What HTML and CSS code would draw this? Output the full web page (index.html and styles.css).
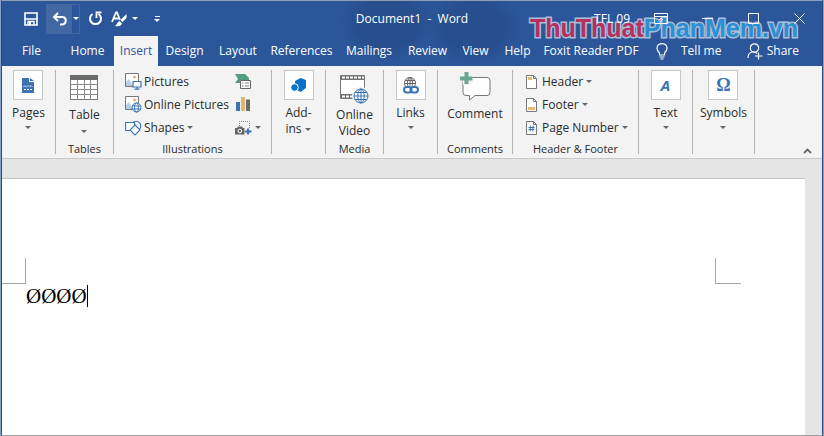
FILE: index.html
```html
<!DOCTYPE html>
<html lang="en">
<head>
  <meta charset="utf-8" />
  <meta name="viewport" content="width=device-width, initial-scale=1.0" />
  <title>Document1 - Word</title>
  <link rel="stylesheet" href="styles.css">
</head>
<body>
  <div class="window">
    <header class="top">
      <div class="titlebar">
        <div class="quick">
          <button class="quick-btn" aria-label="Save">
            <svg width="14" height="14" viewBox="0 0 14 14"><path d="M1 1h12v12H1z" fill="none" stroke="#fff" stroke-width="1.6"/><path d="M1 7h12M4 13V9.500h6V13" fill="none" stroke="#fff" stroke-width="1.4"/><path d="M5 10h2v3H5z" fill="#fff"/></svg>
          </button>
          <div class="undo">
            <button class="undo-main" aria-label="Undo">
              <svg width="16" height="14" viewBox="0 0 16 14"><path d="M6 1L2 5l4 4M2.500 5H10c5 0 5 7 0 7.500H8" fill="none" stroke="#fff" stroke-width="2"/></svg>
            </button>
            <button class="undo-more" aria-label="Undo list"><span class="caret"></span></button>
          </div>
          <button class="quick-btn redo" aria-label="Repeat">
            <svg width="15" height="15" viewBox="0 0 15 15"><path d="M4.500 3A5.500 5.500 0 1 0 10.500 3" fill="none" stroke="#fff" stroke-width="2"/><path d="M8.500 7V1.500h5" fill="none" stroke="#fff" stroke-width="1.800"/></svg>
          </button>
          <button class="quick-btn styles" aria-label="Format">
            <svg width="17" height="16" viewBox="0 0 17 16"><path d="M1 11L5 1.500h1L9 9M2.500 7.500h5" fill="none" stroke="#fff" stroke-width="1.800"/><path d="M15.500 3v4l-4 4-2-2z" fill="#fff"/><path d="M8.500 10l2.500 2.500c-1 3-4 3-7 2.500 2-1 2-4 4.500-5z" fill="#fff"/></svg>
            <span class="caret"></span>
          </button>
          <button class="quick-btn customize" aria-label="Customize toolbar"><span class="bar"></span><span class="caret"></span></button>
        </div>
        <div class="doc-title">Document1&nbsp; -&nbsp; Word</div>
        <div class="controls">
          <button class="user">TFL 09</button>
          <button class="control" aria-label="Ribbon display options">
            <svg width="14" height="11" viewBox="0 0 14 11"><path d="M.5.5h13v10H.5zM.5 3.500h13M7 9V5M5 7l2-2 2 2" fill="none" stroke="#fff"/></svg>
          </button>
          <button class="control" aria-label="Minimize">
            <svg width="11" height="11" viewBox="0 0 11 11"><path d="M0 5.500h11" stroke="#fff"/></svg>
          </button>
          <button class="control" aria-label="Maximize">
            <svg width="11" height="11" viewBox="0 0 11 11"><path d="M.5.5h10v10H.5z" fill="none" stroke="#fff"/></svg>
          </button>
          <button class="control" aria-label="Close">
            <svg width="11" height="11" viewBox="0 0 11 11"><path d="M.5.5l10 10M10.500.5l-10 10" stroke="#fff"/></svg>
          </button>
        </div>
        <div class="brand"><span class="brand-red">ThuThuat</span><span class="brand-blue">PhanMem.vn</span></div>
      </div>
      <nav class="tabs">
        <button class="tab">File</button>
        <button class="tab">Home</button>
        <button class="tab active">Insert</button>
        <button class="tab">Design</button>
        <button class="tab">Layout</button>
        <button class="tab">References</button>
        <button class="tab">Mailings</button>
        <button class="tab">Review</button>
        <button class="tab">View</button>
        <button class="tab">Help</button>
        <button class="tab">Foxit Reader PDF</button>
        <button class="tab tell">
          <svg width="12" height="17" viewBox="0 0 12 17"><path d="M3.500 12V10C-1 6 1 .7 6 .7S13 6 8.500 10v2zM3.500 14h5M4.500 16h3" fill="none" stroke="#fff" stroke-width="1.200"/></svg>
          Tell me
        </button>
        <button class="tab share">
          <svg width="16" height="17" viewBox="0 0 16 17"><circle cx="7.500" cy="5" r="4.200" fill="none" stroke="#fff" stroke-width="1.200"/><path d="M1 15c0-4 2-6 5-6 2 0 3 .5 4 1.500M11.500 9.500v7M8 13h7.500" fill="none" stroke="#fff" stroke-width="1.200"/></svg>
          Share
        </button>
      </nav>
    </header>

    <section class="ribbon">
      <div class="group narrow">
        <button class="big boxed">
          <span class="icon-box"><svg width="12" height="15" viewBox="0 0 12 15"><path d="M0 0h7v4h5v11H0z" fill="#3a74b4"/><path d="M8 0l4 3H8z" fill="#3a74b4"/><path d="M1.500 9l1.500-1.500L4.500 9 6 7.500 7.500 9 9 7.500 10.500 9M2 11.500h8" fill="none" stroke="#fff" stroke-dasharray="2 1"/></svg></span>
          <span>Pages</span><span class="caret dark"></span>
        </button>
      </div>

      <div class="group tables">
        <button class="big">
          <svg width="28" height="25" viewBox="0 0 28 25"><path d="M.5.5h27v24H.5z" fill="#fff" stroke="#777"/><path d="M0 0h28v5H0z" fill="#6b6b6b"/><path d="M.5 9.500h27M.5 14.500h27M.5 19.500h27M7.500 5v20M14.500 5v20M20.500 5v20" stroke="#8a8a8a"/></svg>
          <span>Table</span><span class="caret dark"></span>
        </button>
        <div class="label">Tables</div>
      </div>

      <div class="group illustrations">
        <div class="columns">
          <div class="rows">
            <button class="small">
              <svg width="17" height="17" viewBox="0 0 17 17"><path d="M.5.5h13v13H.5z" fill="#fff" stroke="#777"/><path d="M1 13V9l3-3 4 7z" fill="#b9d0e4"/><circle cx="9.500" cy="4" r="1.500" fill="#e6b566"/><path d="M8 8.500h8V14H8z" fill="#fff" stroke="#3a74b4" stroke-width="1.200"/><path d="M12 14v2M9.500 16.200h5" stroke="#3a74b4" stroke-width="1.200"/></svg>
              Pictures
            </button>
            <button class="small">
              <svg width="17" height="17" viewBox="0 0 17 17"><path d="M.5.5h13v13H.5z" fill="#fff" stroke="#777"/><path d="M1 13V9l3-3 4 7z" fill="#b9d0e4"/><circle cx="9.500" cy="4" r="1.500" fill="#e6b566"/><g fill="none" stroke="#3a74b4"><circle cx="11.500" cy="11.500" r="4.500" fill="#fff"/><ellipse cx="11.500" cy="11.500" rx="2" ry="4.500"/><path d="M7 10h9M7 13h9"/></g></svg>
              Online Pictures
            </button>
            <button class="small">
              <svg width="17" height="16" viewBox="0 0 17 16"><g stroke="#3a74b4" stroke-width="1.100"><circle cx="11" cy="6" r="4.800" fill="#f3f3f3"/><path d="M.6 2.500h9v8h-9z" fill="#fff"/><path d="M10 5l5 5-5 5-5-5z" fill="#fff"/></g></svg>
              Shapes <span class="caret dark"></span>
            </button>
          </div>
          <div class="rows">
            <button class="small" aria-label="SmartArt">
              <svg width="17" height="17" viewBox="0 0 17 17"><path d="M0 1h10l4 4v2H5v3H0l3-4z" fill="#4f9c7f"/><path d="M5.500 7.500h10v8h-10z" fill="#fff" stroke="#666"/><path d="M7 10h1.500M7 13h1.500M10 10h4M10 13h4" stroke="#777"/></svg>
            </button>
            <button class="small" aria-label="Chart">
              <svg width="16" height="15" viewBox="0 0 16 15"><path d="M1 5h4v9H1z" fill="#3a74b4"/><path d="M6 0h4v14H6z" fill="#e3b76b"/><path d="M11 2.500h4V14h-4z" fill="#6b6b6b"/></svg>
            </button>
            <button class="small" aria-label="Screenshot">
              <svg width="17" height="16" viewBox="0 0 17 16"><path d="M4.500 6V1.500h10V8" fill="none" stroke="#888" stroke-dasharray="1 1"/><path d="M0 8h2l1-1.500h4L8 8h1.500v6.500H0z" fill="#666"/><circle cx="4.800" cy="11" r="1.800" fill="none" stroke="#fff"/><path d="M13 8.500v6M10 11.500h6.500" stroke="#3a74b4" stroke-width="2"/></svg>
              <span class="caret dark"></span>
            </button>
          </div>
        </div>
        <div class="label">Illustrations</div>
      </div>

      <div class="group narrow">
        <button class="big boxed">
          <span class="icon-box"><svg width="15" height="14" viewBox="0 0 15 14"><path d="M9.500 0L15 2v8l-5.500 4L4 11V3z" fill="#0a72c6"/><circle cx="3.500" cy="9.500" r="3.800" fill="#0a72c6" stroke="#fff"/></svg></span>
          <span>Add-<br><span class="with-caret">ins <span class="caret dark"></span></span></span>
        </button>
      </div>

      <div class="group tables">
        <button class="big video">
          <svg width="29" height="29" viewBox="0 0 29 29"><path d="M.5.500h24v23H.5z" fill="#fff" stroke="#777"/><path d="M1 2.500h23M1 21.500h23" stroke="#6b6b6b" stroke-width="3"/><path d="M2 2.500h22M2 21.500h22" stroke="#fff" stroke-width="2" stroke-dasharray="3 1"/><path d="M0 4.500h25M0 19.500h25" stroke="#777"/><g fill="none" stroke="#3a74b4"><circle cx="21" cy="21" r="8.500" fill="#f3f3f3" stroke="#f3f3f3"/><circle cx="21" cy="21" r="7" fill="#fff"/><ellipse cx="21" cy="21" rx="3.200" ry="7"/><path d="M14 21h14M15 17.500h12M15 24.500h12M21 14v14"/></g></svg>
          <span>Online<br>Video</span>
        </button>
        <div class="label">Media</div>
      </div>

      <div class="group narrow">
        <button class="big boxed">
          <span class="icon-box"><svg width="16" height="17" viewBox="0 0 16 17"><g fill="none" stroke="#666"><circle cx="7" cy="6" r="5.500"/><ellipse cx="7" cy="6" rx="2.500" ry="5.500"/><path d="M2 3.500h10M1.500 6.500h11M7 0v10"/></g><path d="M0 9h16v8H0z" fill="#fff"/><g fill="none" stroke="#3a74b4" stroke-width="2"><rect x="1" y="10" width="7.500" height="5.500" rx="2.700"/><rect x="7.500" y="10" width="7.500" height="5.500" rx="2.700"/></g></svg></span>
          <span>Links</span><span class="caret dark"></span>
        </button>
      </div>

      <div class="group comments">
        <button class="big comment">
          <svg width="31" height="29" viewBox="0 0 31 29"><path d="M5 5.500h22q3 0 3 3v12q0 3-3 3H15L9.500 28v-4.500H6q-3 0-3-3v-12q0-3 2-3z" fill="#fff" stroke="#777"/><path d="M6 0v13M0 6.500h12.500" stroke="#f3f3f3" stroke-width="6"/><path d="M6.500 0v12M0 6.500h12.500" stroke="#6ba692" stroke-width="4"/></svg>
          <span>Comment</span>
        </button>
        <div class="label">Comments</div>
      </div>

      <div class="group header-footer">
        <div class="rows">
          <button class="small">
            <svg width="11" height="14" viewBox="0 0 11 14"><path d="M.5.500h7l3 3v10H.5zM7.500.5v3h3" fill="#fff" stroke="#777"/><path d="M2 2h4v3H2z" fill="#e8b96c"/></svg>
            Header <span class="caret dark"></span>
          </button>
          <button class="small">
            <svg width="11" height="14" viewBox="0 0 11 14"><path d="M.5.500h7l3 3v10H.5zM7.500.5v3h3" fill="#fff" stroke="#777"/><path d="M2 9h7v3H2z" fill="#e8b96c"/></svg>
            Footer <span class="caret dark"></span>
          </button>
          <button class="small">
            <svg width="11" height="14" viewBox="0 0 11 14"><path d="M.5.500h7l3 3v10H.5zM7.500.5v3h3" fill="#fff" stroke="#777"/><path d="M4.500 4.500L4 10.500M7.200 4.500l-.5 6M2.500 6.500h6M2.500 8.500h6" stroke="#3a74b4"/></svg>
            Page Number <span class="caret dark"></span>
          </button>
        </div>
        <div class="label">Header &amp; Footer</div>
      </div>

      <div class="group narrow">
        <button class="big boxed">
          <span class="icon-box letter italic">A</span>
          <span>Text</span><span class="caret dark"></span>
        </button>
      </div>

      <div class="group symbols">
        <button class="big boxed">
          <span class="icon-box letter">Ω</span>
          <span>Symbols</span><span class="caret dark"></span>
        </button>
      </div>

      <button class="collapse" aria-label="Collapse the ribbon">
        <svg width="9" height="6" viewBox="0 0 9 6"><path d="M1 5l3.500-3.500L8 5" fill="none" stroke="#666" stroke-width="1.800"/></svg>
      </button>
    </section>

    <main class="workspace">
      <div class="page">
        <div class="margins"><span class="mark left"></span><span class="mark right"></span></div>
        <p class="text">ØØØØ<span class="cursor"></span></p>
      </div>
    </main>
  </div>
</body>
</html>
```
FILE: styles.css
```css
* {
  box-sizing: border-box;
}

body {
  margin: 0;
  font-family: "Open Sans", "Noto Sans", sans-serif;
  font-size: 12px;
  line-height: 16px;
  color: #2b2b2b;
  background: #86a0cc;
}

button {
  margin: 0;
  padding: 0;
  border: 0;
  background: none;
  color: inherit;
  font: inherit;
}

svg {
  display: block;
  flex-shrink: 0;
}

.window {
  display: flex;
  flex-direction: column;
  min-height: 100vh;
  margin: 0 1px;
  border: 1px solid #2b4a80;
  border-top-color: #8e9fb5;
  border-bottom-color: #a0a0a0;
}

.top {
  color: #fff;
  background:
    radial-gradient(ellipse 50px 40px at 385px 22px, #274f8e 60%, transparent 100%),
    radial-gradient(ellipse 50px 40px at 472px 26px, #274f8e 60%, transparent 100%),
    #2b579a;
}

/* title bar */
.titlebar {
  position: relative;
  display: grid;
  grid-template-columns: 1fr auto 1fr;
  align-items: center;
  height: 35px;
}

.quick,
.controls {
  position: relative;
  z-index: 1;
  display: flex;
  align-items: center;
}

.quick {
  padding-left: 22px;
}

.undo {
  display: flex;
  height: 30px;
  margin: 0 8px;
  border: 1px solid #41699f;
}

.undo-main {
  width: 25px;
  padding-left: 5px;
  background: #4268a4;
}

.undo-more {
  display: flex;
  align-items: center;
  justify-content: center;
  width: 7px;
}

.styles {
  display: flex;
  align-items: center;
  gap: 4px;
  margin-left: 8px;
}

.customize {
  display: flex;
  flex-direction: column;
  align-items: center;
  gap: 2px;
  margin-left: 16px;
}

.bar {
  width: 5px;
  height: 1px;
  background: #fff;
}

.caret {
  display: inline-block;
  flex-shrink: 0;
  border: 3px solid transparent;
  border-top-color: currentColor;
  border-bottom: 0;
}

.caret.dark {
  color: #666;
}

.with-caret {
  display: flex;
  align-items: center;
  gap: 3px;
}

.controls {
  justify-content: flex-end;
}

.user {
  margin-right: 8px;
}

.control {
  display: flex;
  align-items: center;
  justify-content: center;
  width: 46px;
  height: 30px;
}

.brand {
  position: absolute;
  top: 10px;
  right: 24px;
  font-family: "Liberation Sans Narrow", "Liberation Sans", sans-serif;
  font-size: 25px;
  font-weight: bold;
  line-height: 34px;
  white-space: nowrap;
  -webkit-text-stroke: 3px #a9bcd8;
  paint-order: stroke fill;
}

.brand-red {
  color: #b5305c;
}

.brand-blue {
  color: #2a8fd3;
}

/* tabs */
.tabs {
  display: grid;
  grid-template-columns: 59px 53px 44px 53px 54px 73px 62px 55px 41px 43px 104px auto 1fr;
  height: 30px;
}

.tab {
  display: flex;
  align-items: center;
  justify-content: center;
  white-space: nowrap;
}

.tab.active {
  background: #f3f3f3;
  color: #2b579a;
}

.tab.tell {
  gap: 13px;
  padding-left: 13px;
}

.tab.share {
  justify-content: flex-end;
  gap: 4px;
  padding-right: 23px;
}

/* ribbon */
.ribbon {
  display: flex;
  height: 93px;
  padding: 4px 0;
  background: #f3f3f3;
  border-bottom: 1px solid #c8c8c8;
}

.group {
  display: flex;
  flex-direction: column;
  align-items: center;
  justify-content: space-between;
  flex-shrink: 0;
  border-right: 1px solid #b4b4b4;
}

.narrow {
  width: 54px;
}

.tables {
  width: 58px;
}

.illustrations {
  width: 158px;
}

.comments {
  width: 75px;
}

.header-footer {
  width: 126px;
}

.symbols {
  width: 62px;
}

.label {
  height: 12px;
  white-space: nowrap;
  font-size: 11px;
  line-height: 14px;
}

.big {
  display: flex;
  flex-direction: column;
  align-items: center;
  gap: 7px;
  padding-top: 5px;
}

.big.boxed {
  gap: 5px;
  padding-top: 0;
}

.big.video {
  gap: 3px;
}

.big.comment {
  gap: 5px;
  padding-top: 2px;
}

.icon-box {
  display: flex;
  align-items: center;
  justify-content: center;
  width: 30px;
  height: 30px;
  border: 1px solid #c6c6c6;
  background: #fff;
}

.letter {
  color: #3a74b4;
  font-family: "Liberation Serif", serif;
  font-size: 18px;
  font-weight: bold;
}

.italic {
  font-family: "Open Sans", sans-serif;
  font-size: 15px;
  font-style: italic;
}

.columns {
  display: flex;
  justify-content: space-between;
  align-self: stretch;
  padding: 0 10px 0 11px;
}

.rows {
  display: flex;
  flex-direction: column;
}

.header-footer .rows {
  align-self: stretch;
  padding-left: 13px;
}

.header-footer .small {
  gap: 5px;
}

.small {
  display: flex;
  align-items: center;
  gap: 2px;
  height: 23px;
  white-space: nowrap;
}

.small .caret {
  margin-left: 1px;
}

.header-footer .small .caret {
  margin-left: -2px;
}

.collapse {
  align-self: flex-end;
  margin-left: auto;
  padding: 0 10px 0 0;
}

/* document */
.workspace {
  display: flex;
  flex: 1;
  padding: 19px 17px 0 0;
  background: #e5e5e5;
}

.page {
  flex: 1;
  padding-top: 79px;
  background: #fff;
  border-top: 1px solid #c3c3c3;
}

.margins {
  display: flex;
  justify-content: space-between;
  padding-right: 64px;
}

.mark {
  height: 26px;
  border-bottom: 1px solid #a6a6a6;
}

.mark.left {
  width: 24px;
  border-right: 1px solid #a6a6a6;
}

.mark.right {
  width: 26px;
  border-left: 1px solid #a6a6a6;
}

.text {
  display: flex;
  align-items: center;
  margin: 0;
  padding-left: 24px;
  color: #000;
  font-family: "Liberation Serif", serif;
  font-size: 21px;
  line-height: 24px;
}

.cursor {
  width: 1px;
  height: 22px;
  background: #000;
}
```
